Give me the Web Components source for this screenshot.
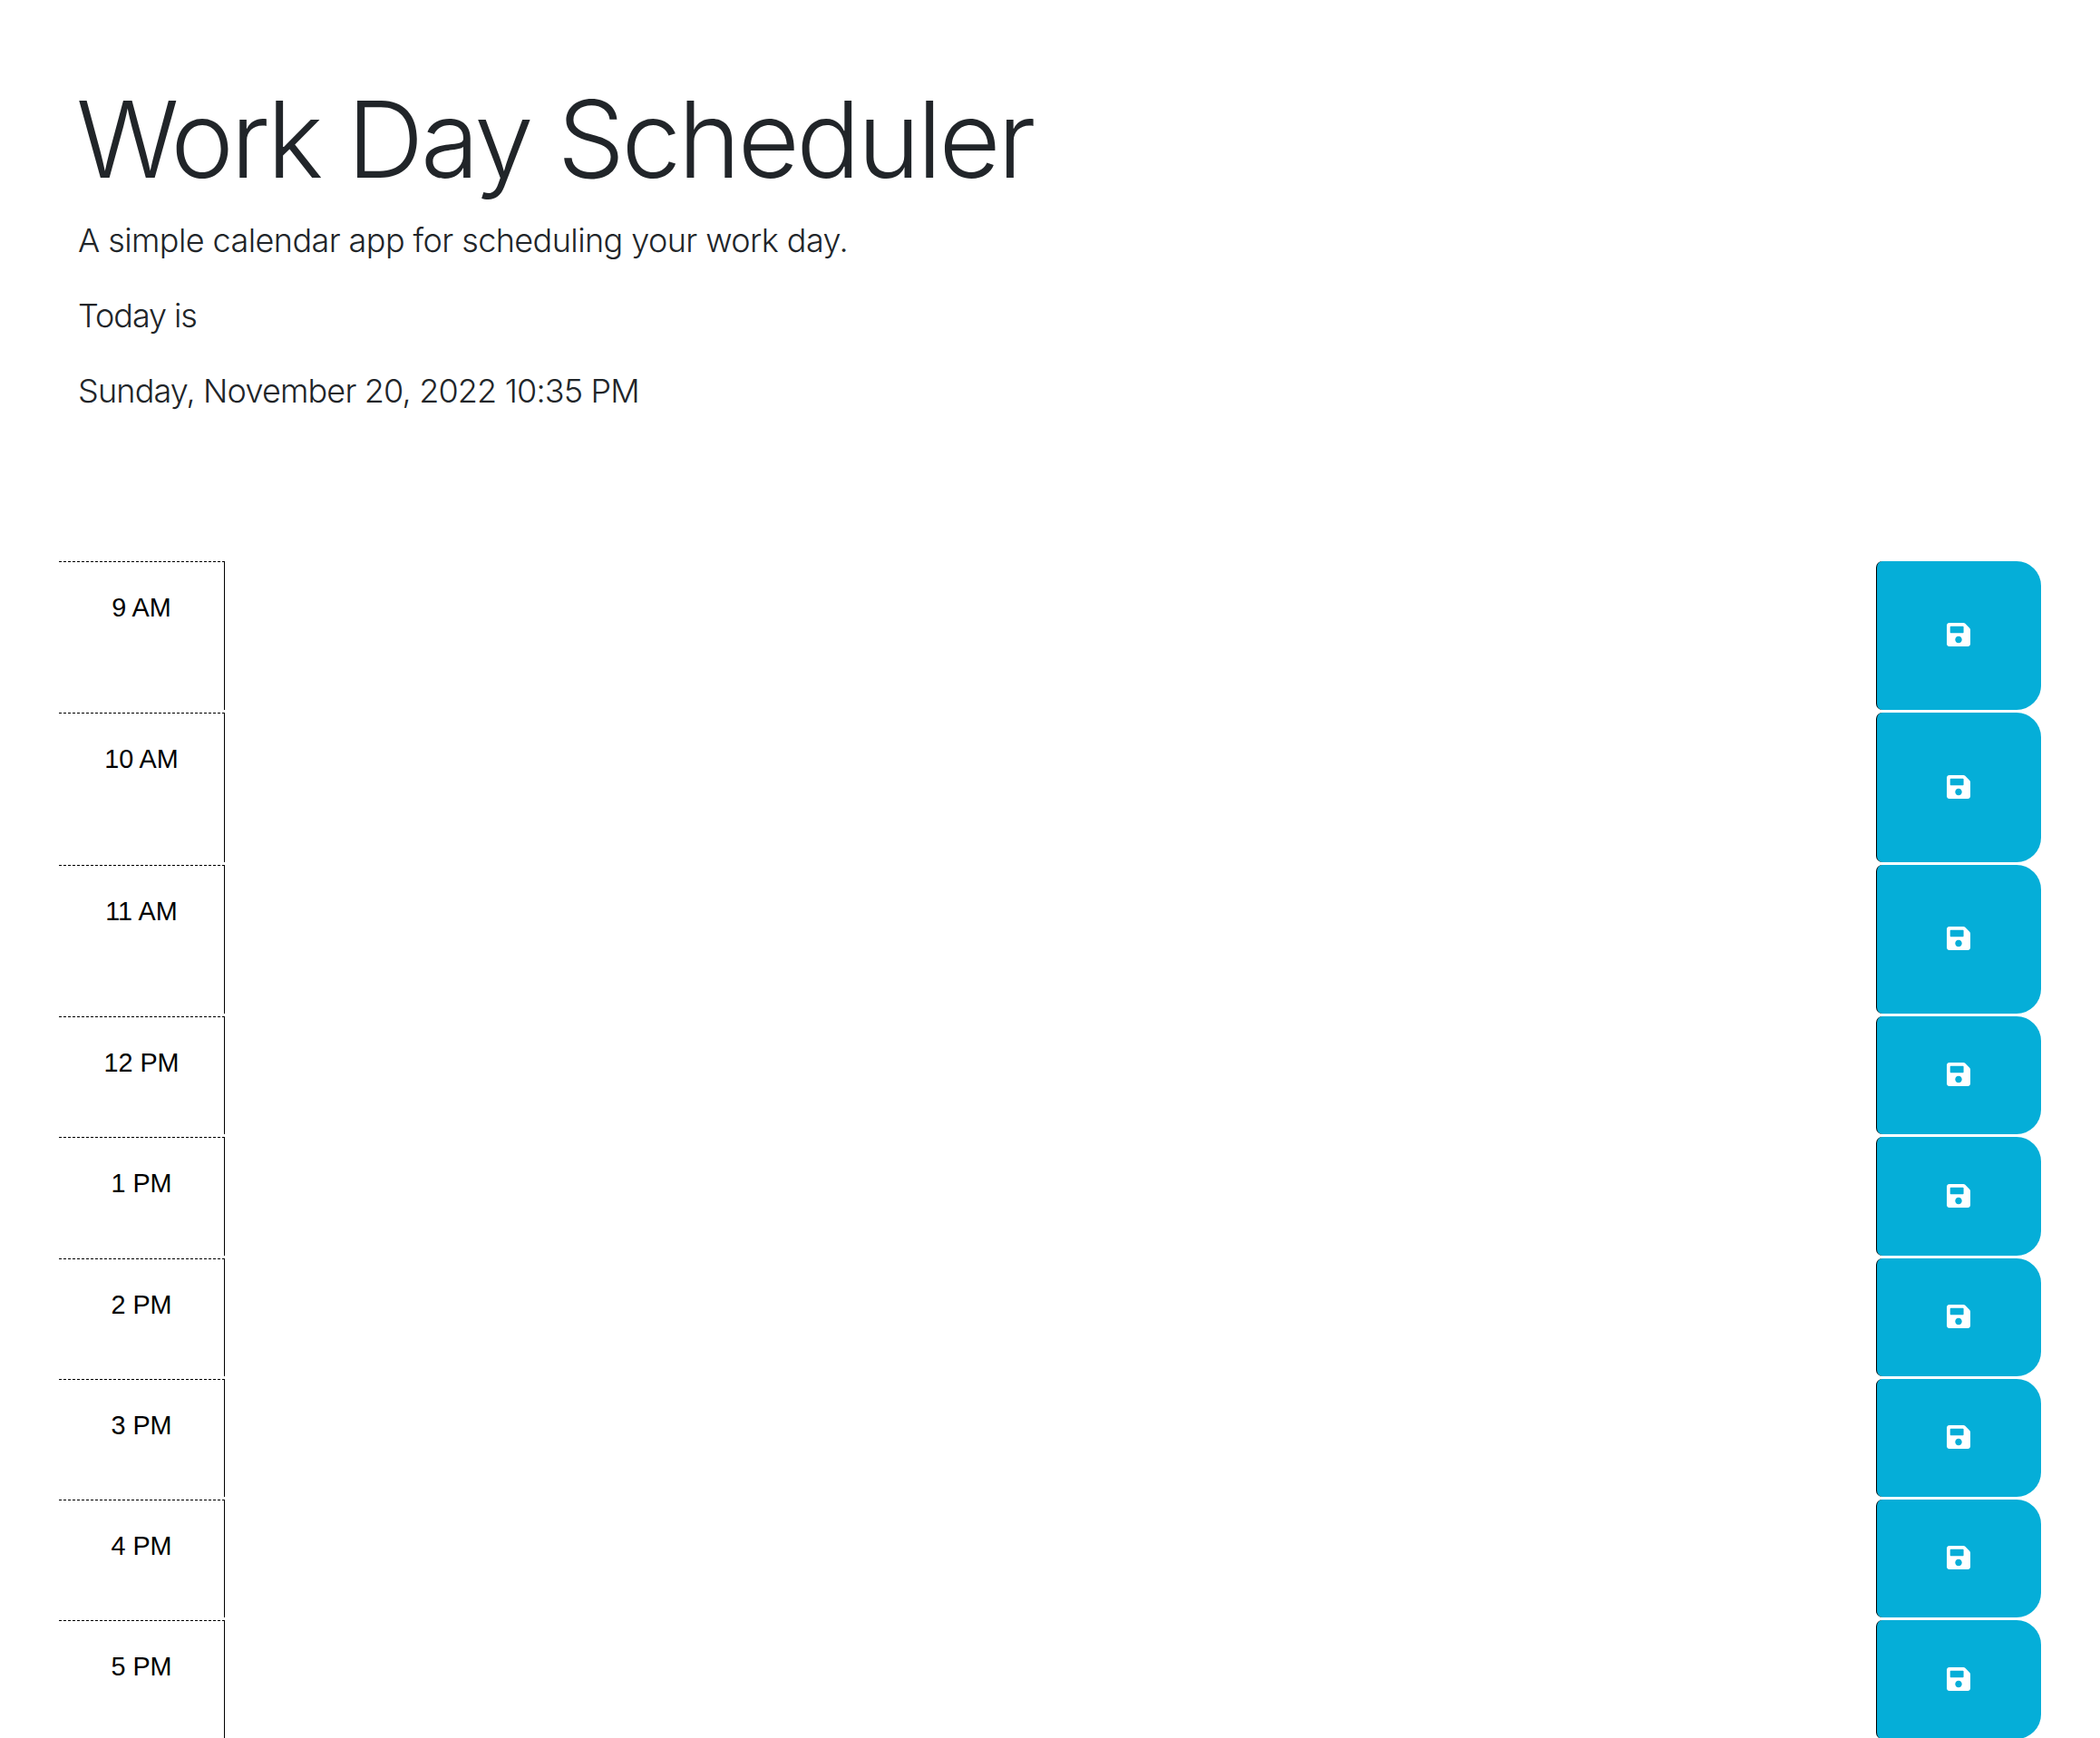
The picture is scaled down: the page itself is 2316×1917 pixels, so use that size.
<!DOCTYPE html>
<html>
<head>
<meta charset="utf-8">
<title>Work Day Scheduler</title>
<style>
  html, body { margin: 0; background: #fff; overflow: hidden; height: 1917px; }
  body { font-family: "Liberation Sans", Arial, sans-serif; }
</style>
</head>
<body>
<sched-app>
  <sched-header slot="header" title="Work Day Scheduler" lead="A simple calendar app for scheduling your work day.">
    <p style="letter-spacing: -1.07px">Today is</p>
    <p style="letter-spacing: -0.83px">Sunday, November 20, 2022 10:35 PM</p>
  </sched-header>
  <time-block hour="9 AM" tall></time-block>
  <time-block hour="10 AM" tall></time-block>
  <time-block hour="11 AM" tall></time-block>
  <time-block hour="12 PM"></time-block>
  <time-block hour="1 PM"></time-block>
  <time-block hour="2 PM"></time-block>
  <time-block hour="3 PM"></time-block>
  <time-block hour="4 PM"></time-block>
  <time-block hour="5 PM"></time-block>
</sched-app>
<script>
"use strict";
customElements.define("sched-app", class extends HTMLElement {
  constructor() {
    super();
    let shadowRoot = this.attachShadow({mode: 'open'});
    shadowRoot.innerHTML = `
      <style>
        :host { display: block; }
        .rows { display: flex; flex-direction: column; padding: 0 65px; }
      </style>
      <slot name="header"></slot>
      <div class="rows"><slot></slot></div>
    `;
  }
});

customElements.define("sched-header", class extends HTMLElement {
  constructor() {
    super();
    let shadowRoot = this.attachShadow({mode: 'open'});
    shadowRoot.innerHTML = `
      <style>
        :host {
          display: block;
          box-sizing: border-box;
          height: 619px;
          padding: 83px 86px 0;
          color: #212529;
          font-family: "Inter", "Liberation Sans", sans-serif;
          font-weight: 300;
        }
        h1 { margin: 0 0 14.4px -2px; font-size: 117.5px; font-weight: 300; line-height: 1.2; letter-spacing: -3.4px; }
        p, ::slotted(p) { margin: 0 0 28.8px; font-size: 36px; line-height: 54px; }
        .lead { letter-spacing: -0.58px; }
      </style>
      <h1></h1>
      <p class="lead"></p>
      <slot></slot>
    `;
    shadowRoot.querySelector("h1").textContent = this.getAttribute("title");
    shadowRoot.querySelector(".lead").textContent = this.getAttribute("lead");
  }
});

customElements.define("time-block", class extends HTMLElement {
  constructor() {
    super();
    let shadowRoot = this.attachShadow({mode: 'open'});
    shadowRoot.innerHTML = `
      <style>
        :host {
          display: flex;
          box-sizing: border-box;
          height: 133.25px;
          padding-bottom: 3px;
        }
        :host([tall]) { height: 167.4px; }
        .hour {
          box-sizing: border-box;
          flex: 0 0 183px;
          border-top: 1px dashed #000;
          border-right: 1px solid #000;
          padding-top: 29px;
          text-align: center;
          color: #000;
          font-size: 28.8px;
          line-height: 43px;
        }
        textarea {
          flex: 1;
          border: 0;
          padding: 0;
          outline: 0;
          resize: none;
          background: transparent;
        }
        button {
          box-sizing: border-box;
          flex: 0 0 182px;
          display: flex;
          align-items: center;
          justify-content: center;
          padding: 0 1px 2px 0;
          border: 0;
          border-left: 1px solid #000;
          border-radius: 7px 27px 27px 7px;
          background: #05aed8;
          color: #fff;
        }
        svg { width: 26px; height: 30px; fill: currentColor; display: block; }
      </style>
      <div class="hour"></div>
      <textarea></textarea>
      <button type="button" aria-label="Save">
        <svg viewBox="0 0 448 512"><path d="M433.941 129.941l-83.882-83.882A48 48 0 0 0 316.118 32H48C21.49 32 0 53.49 0 80v352c0 26.51 21.49 48 48 48h352c26.51 0 48-21.49 48-48V163.882a48 48 0 0 0-14.059-33.941zM224 416c-35.346 0-64-28.654-64-64 0-35.346 28.654-64 64-64s64 28.654 64 64c0 35.346-28.654 64-64 64zm96-304.52V212c0 6.627-5.373 12-12 12H76c-6.627 0-12-5.373-12-12V108c0-6.627 5.373-12 12-12h228.52c3.183 0 6.235 1.264 8.485 3.515l3.48 3.48A11.996 11.996 0 0 1 320 111.48z"/></svg>
      </button>
    `;
    shadowRoot.querySelector(".hour").textContent = this.getAttribute("hour");
  }
});
</script>
</body>
</html>
